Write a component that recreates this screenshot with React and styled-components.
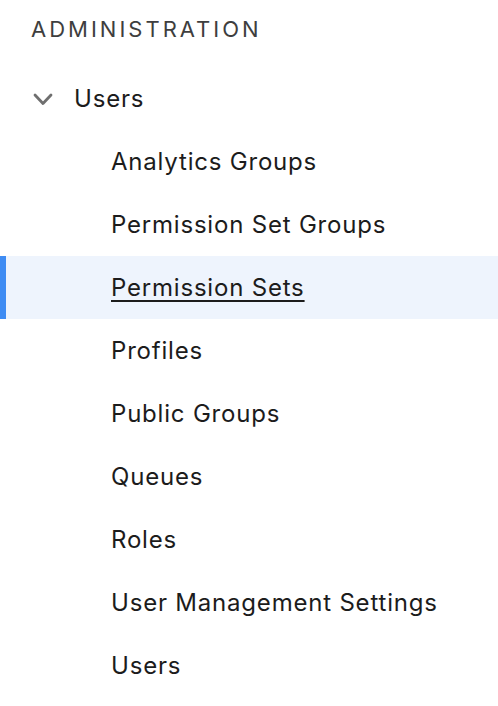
import React from 'react';
import styled, { createGlobalStyle } from 'styled-components';

const GlobalStyle = createGlobalStyle`
  html, body {
    margin: 0;
    padding: 0;
    background: #ffffff;
  }
  body {
    font-family: Inter, "Noto Sans", "Liberation Sans", sans-serif;
    -webkit-font-smoothing: antialiased;
  }
`;

const Nav = styled.nav`
  width: 498px;
  display: flex;
  flex-direction: column;
`;

const Heading = styled.h2`
  margin: 0;
  height: 67px;
  padding: 14px 0 0 31px;
  box-sizing: border-box;
  font-size: 22px;
  font-weight: 400;
  letter-spacing: 3px;
  line-height: 30px;
  color: #3e3e3e;
  text-transform: uppercase;
`;

const GroupToggle = styled.button`
  display: flex;
  align-items: center;
  gap: 21px;
  height: 63px;
  padding: 0 0 0 33px;
  border: none;
  background: none;
  font: inherit;
  font-size: 24px;
  letter-spacing: 0.8px;
  color: #1c1c1c;
  text-align: left;
  cursor: pointer;
`;

const Chevron = styled.svg`
  width: 20px;
  height: 20px;
  flex: none;
  color: #6f6f6f;
`;

const List = styled.ul`
  list-style: none;
  margin: 0;
  padding: 0;
`;

const Item = styled.li`
  height: 63px;
  display: flex;
  align-items: center;
  padding-left: 111px;
  font-size: 24px;
  letter-spacing: 0.8px;
  color: #1c1c1c;
  background: ${p => (p.$active ? '#eef4fd' : 'transparent')};
  box-shadow: ${p => (p.$active ? 'inset 6px 0 0 #3f8cf3' : 'none')};
`;

const Link = styled.a`
  color: inherit;
  text-decoration: ${p => (p.$active ? 'underline' : 'none')};
  text-decoration-thickness: 2px;
  text-underline-offset: 4px;
  cursor: pointer;
`;

const items = [
  'Analytics Groups',
  'Permission Set Groups',
  'Permission Sets',
  'Profiles',
  'Public Groups',
  'Queues',
  'Roles',
  'User Management Settings',
  'Users',
];

const active = 'Permission Sets';

export default function App() {
  return (
    <>
      <GlobalStyle />
      <Nav>
        <Heading>Administration</Heading>
        <GroupToggle>
          <Chevron viewBox="0 0 20 20" fill="none" stroke="currentColor" strokeWidth="2.8" strokeLinecap="round" strokeLinejoin="round">
            <path d="M2 6l8 8.5 8-8.5" />
          </Chevron>
          Users
        </GroupToggle>
        <List>
          {items.map(label => (
            <Item key={label} $active={label === active}>
              <Link $active={label === active}>{label}</Link>
            </Item>
          ))}
        </List>
      </Nav>
    </>
  );
}
